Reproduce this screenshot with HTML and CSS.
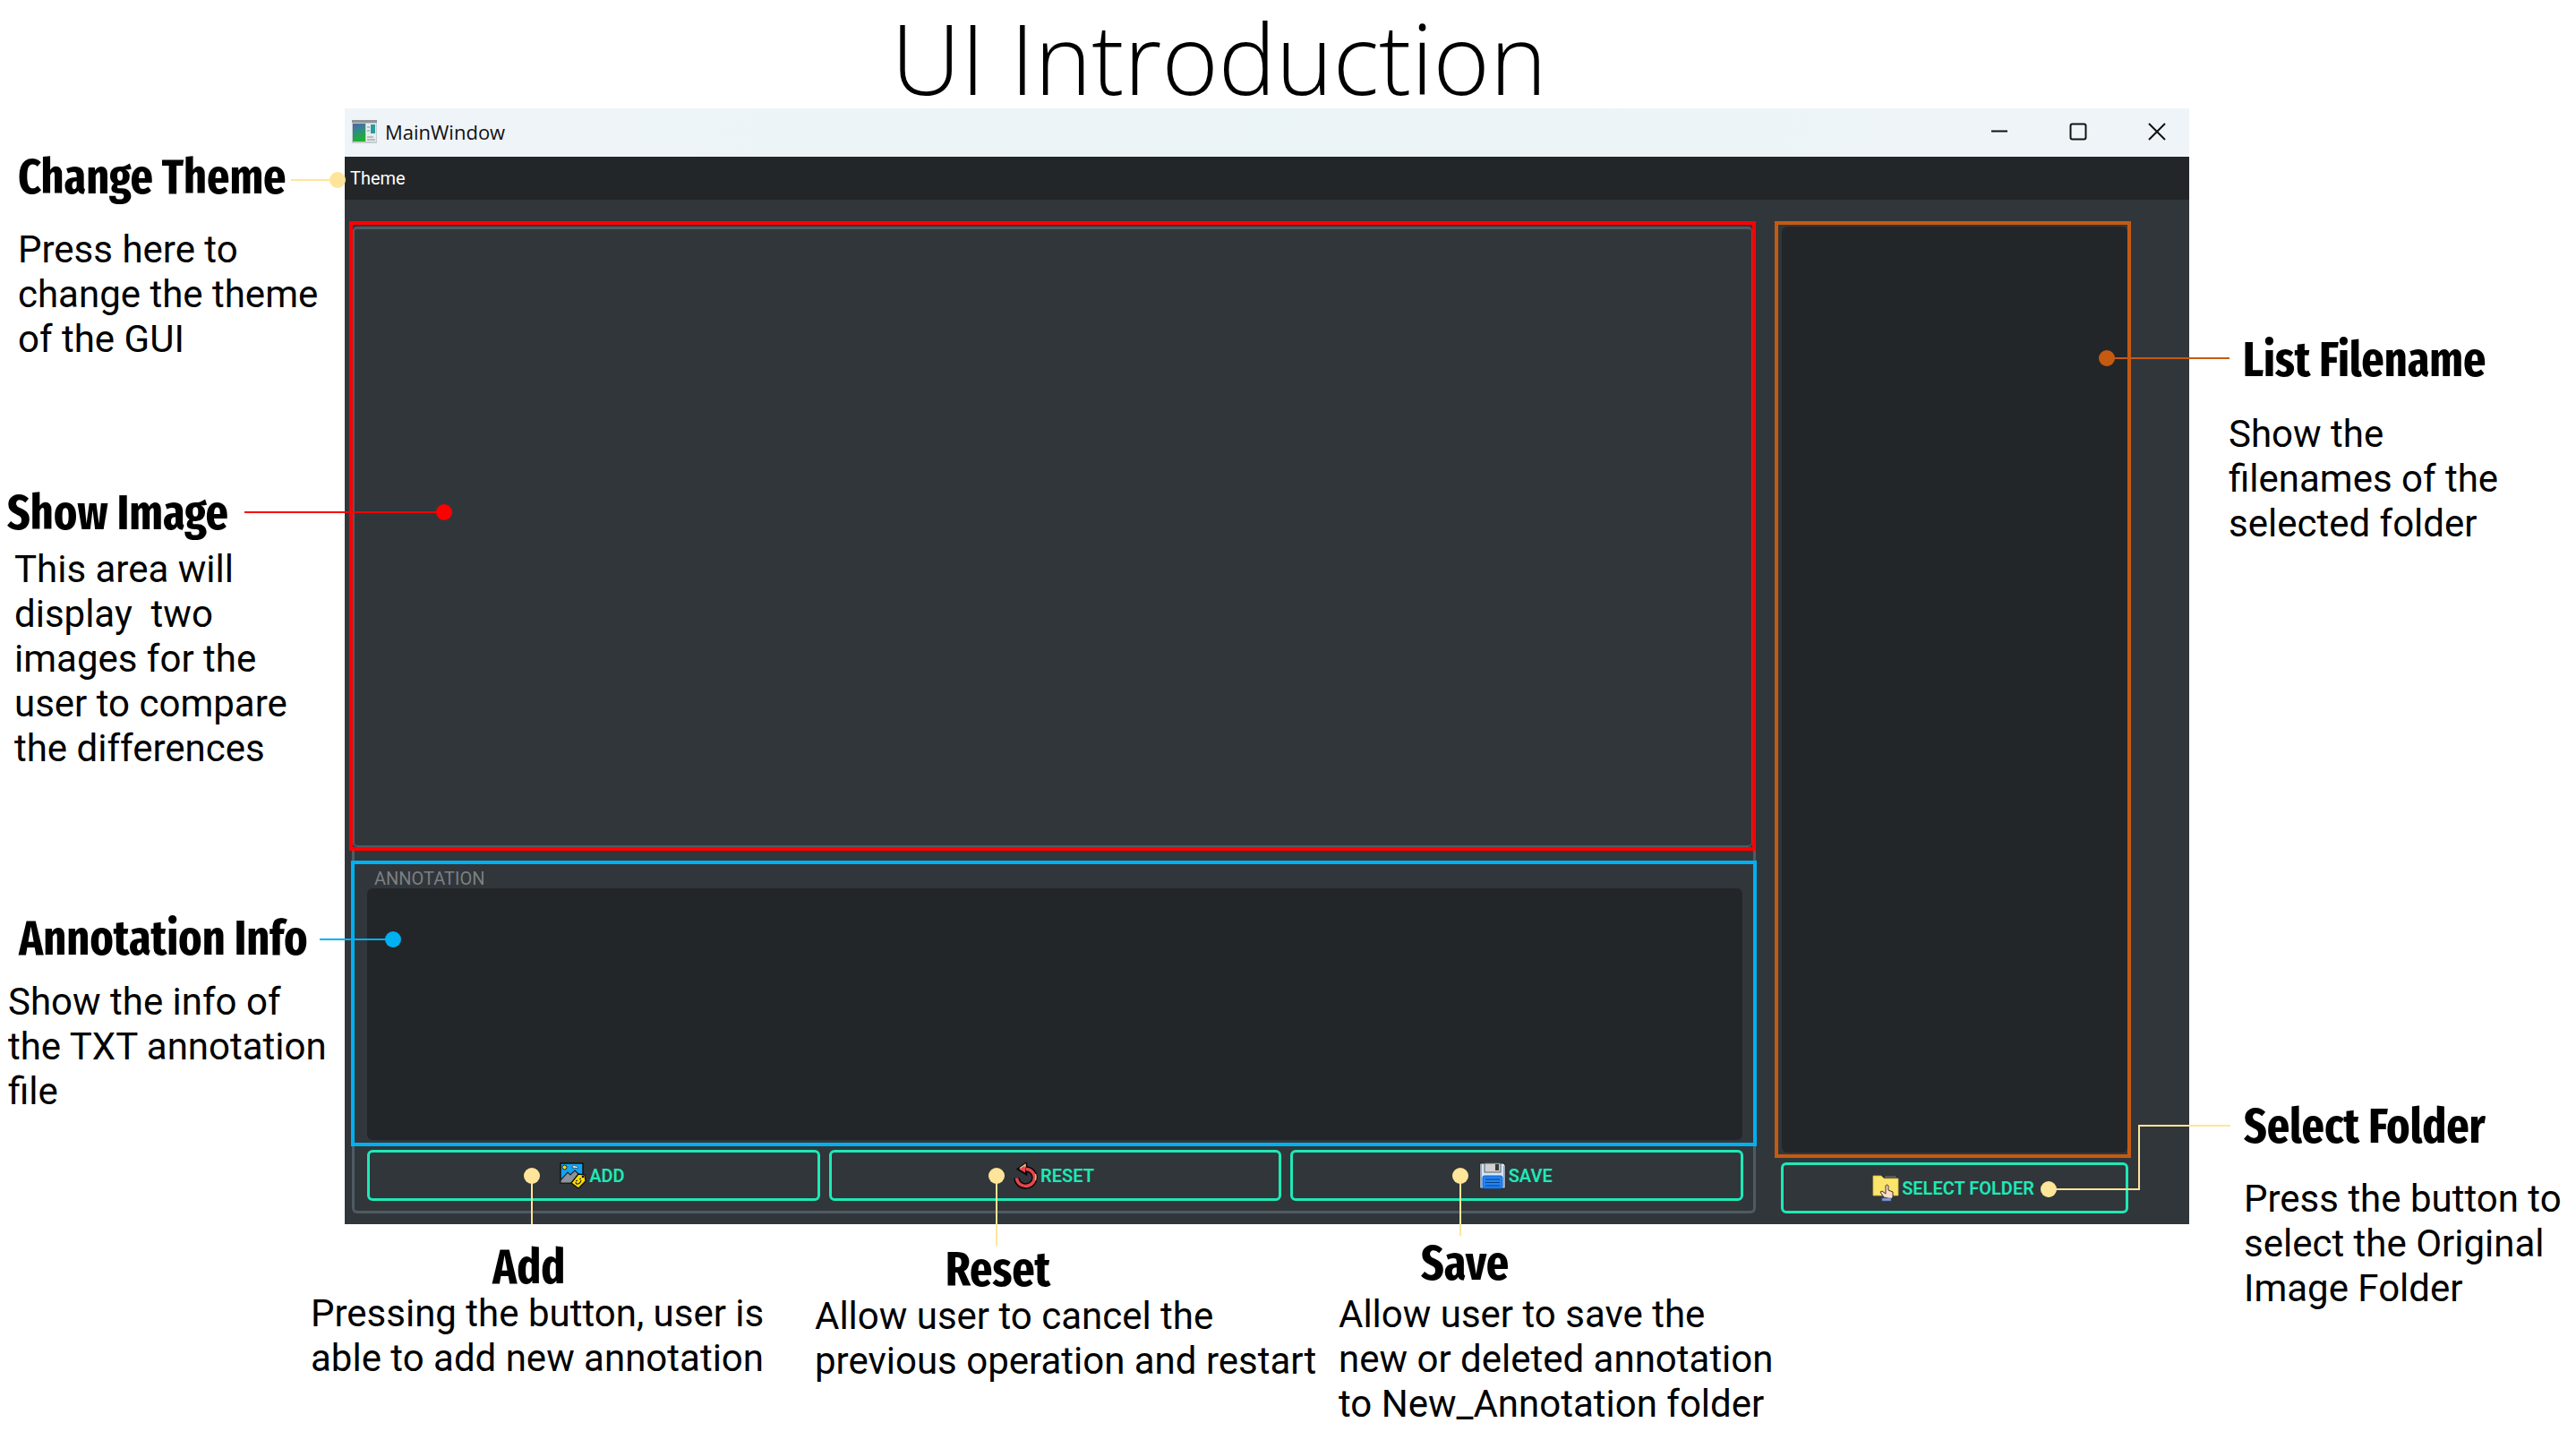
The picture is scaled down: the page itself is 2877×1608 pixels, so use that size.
FILE: index.html
```html
<!DOCTYPE html>
<html lang="en">
<head>
<meta charset="utf-8">
<title>UI Introduction</title>
<link rel="stylesheet" href="styles.css">
</head>
<body>
<h1 class="page-title">UI Introduction</h1>
<main class="guide">
  <aside class="notes-left">
    <section class="note note-theme">
      <h2>Change Theme</h2>
      <p>Press here to<br>change the theme<br>of the GUI</p>
    </section>
    <section class="note note-image">
      <h2>Show Image</h2>
      <p>This area will<br>display&nbsp; two<br>images for the<br>user to compare<br>the differences</p>
    </section>
    <section class="note note-annotation">
      <h2>Annotation Info</h2>
      <p>Show the info of<br>the TXT annotation<br>file</p>
    </section>
  </aside>

  <div class="window">
    <header class="titlebar">
      <svg class="app-icon" viewBox="0 0 28 26" aria-hidden="true">
        <defs><linearGradient id="scene" x1="0" y1="0" x2="0.3" y2="1"><stop offset="0" stop-color="#5560a8"/><stop offset="0.5" stop-color="#2f8c86"/><stop offset="1" stop-color="#1fb02c"/></linearGradient></defs>
        <rect x="0" y="0" width="28" height="26" fill="#c6cccf"/>
        <rect x="0" y="0" width="28" height="3" fill="#8d9599"/>
        <rect x="1" y="4" width="14" height="20" fill="url(#scene)"/>
        <rect x="16" y="4" width="11" height="20" fill="#e8ecee"/>
        <rect x="21" y="5" width="5" height="10" fill="#2a9a9c"/>
        <path d="M17 8h3M17 12h3M17 19h7M17 22h9" stroke="#a5adb1" stroke-width="1.5"/>
      </svg>
      <span class="window-name">MainWindow</span>
      <div class="window-controls">
        <button type="button" aria-label="Minimize"><svg viewBox="0 0 20 20"><path d="M1 9.500h18"/></svg></button>
        <button type="button" aria-label="Maximize"><svg viewBox="0 0 20 20"><rect x="1.500" y="1.500" width="17" height="17" rx="2"/></svg></button>
        <button type="button" aria-label="Close"><svg viewBox="0 0 20 20"><path d="M1 1l18 18M19 1L1 19"/></svg></button>
      </div>
    </header>
    <nav class="menubar"><button type="button">Theme</button></nav>
    <div class="workspace">
      <div class="editor">
        <div class="viewer"><div class="canvas"></div></div>
        <div class="group">
          <div class="annotation">
            <label for="annotation-text">ANNOTATION</label>
            <textarea id="annotation-text"></textarea>
          </div>
          <div class="actions">
            <button type="button" class="action">
              <svg viewBox="0 0 30 30" aria-hidden="true">
                <rect x="1" y="1" width="25" height="22" fill="#10a4f5" stroke="#111" stroke-width="1.500"/>
                <circle cx="5.500" cy="5.500" r="2.500" fill="#ffd800" stroke="#222"/>
                <path d="M14 6c0-2 2-3 3.500-2 2 0 3 1 3 2.500z" fill="#fff" stroke="#333" stroke-width=".8"/>
                <path d="M1 20L9 11l3 3 5-5 9 9v5H1z" fill="#8b949b" stroke="#222" stroke-width="1.200"/>
                <path d="M13 23l8-10 7 1 1 7-8 8z" fill="#ffdf00" stroke="#111" stroke-width="1.300" stroke-linejoin="round"/>
                <circle cx="26" cy="16" r="1.300" fill="#111"/>
                <path d="M18 22c0 3 5 3 6-2M18 21l2-1M22 19l2-1" fill="none" stroke="#222" stroke-width="1.200"/>
              </svg>ADD</button>
            <button type="button" class="action">
              <svg class="reset-icon" viewBox="0 0 27 30" aria-hidden="true">
                <path d="M3.500 17.500a10 9.500 0 1 0 10-10" fill="none" stroke="#080808" stroke-width="6.500"/>
                <path d="M5 7.500l9-6.500v12z" fill="#e5484d" stroke="#080808" stroke-width="2.500"/>
                <path d="M3.500 17.500a10 9.500 0 1 0 10-10" fill="none" stroke="#e5474d" stroke-width="3.500"/>
                <path d="M6 7.500l7-5v9z" fill="#e5474d"/>
                <path d="M7 6.500l6-4v3M24.500 13q1 3 0 7" fill="none" stroke="#efb77c" stroke-width="1.500"/>
              </svg>RESET</button>
            <button type="button" class="action">
              <svg viewBox="0 0 30 30" aria-hidden="true">
                <path d="M1 1h26l2 2v26H1z" fill="#d5e5f6" stroke="#20242a" stroke-width="1"/>
                <path d="M2 2v26M28 4v24" stroke="#9aa6b5" stroke-width="2"/>
                <rect x="6" y="1" width="18" height="10" fill="#d0d0d0" stroke="#5a5f66"/>
                <rect x="18" y="2" width="4" height="7" fill="#3a3a3a"/>
                <rect x="4" y="15" width="22" height="14" rx="2" fill="#1f84f5" stroke="#1763bf"/>
                <path d="M7 19h16M7 22.500h16M7 26h16" stroke="#0c3f85" stroke-width="1.200"/>
              </svg>SAVE</button>
          </div>
        </div>
      </div>
      <div class="files">
        <div class="file-frame"><ul class="file-list" aria-label="Filenames"></ul></div>
        <button type="button" class="action">
          <svg viewBox="0 0 30 30" aria-hidden="true">
            <path d="M1 1h9l3 3h16v19H1z" fill="#fbe46a" stroke="#d2b93d" stroke-width=".8"/>
            <path d="M13 1h15v2H14z" fill="#1d2023"/><path d="M14 2h13" stroke="#8c9298"/>
            <path d="M13 25l-4-6 2-1 4 3v-9q1.500-2 3 0v5l5 2v6l-2 2z" fill="#ffd9c7" stroke="#3b3431" stroke-width="1"/>
            <rect x="11" y="26" width="10" height="3" fill="#7f9fdc" stroke="#4c5f8a" stroke-width=".6"/>
          </svg>SELECT FOLDER</button>
      </div>
    </div>
    <div class="pin pin-theme"></div>
    <div class="pin pin-image"></div>
    <div class="pin pin-annotation"></div>
    <div class="pin pin-list"></div>
    <div class="pin pin-add"></div>
    <div class="pin pin-reset"></div>
    <div class="pin pin-save"></div>
    <div class="pin pin-select"></div>
  </div>

  <aside class="notes-right">
    <section class="note note-list">
      <h2>List Filename</h2>
      <p>Show the<br>filenames of the<br>selected folder</p>
    </section>
    <section class="note note-select">
      <h2>Select Folder</h2>
      <p>Press the button to<br>select the Original<br>Image Folder</p>
    </section>
  </aside>

  <div class="notes-bottom">
    <section class="note note-add">
      <h2>Add</h2>
      <p>Pressing the button, user is<br>able to add new annotation</p>
    </section>
    <section class="note note-reset">
      <h2>Reset</h2>
      <p>Allow user to cancel the<br>previous operation and restart</p>
    </section>
    <section class="note note-save">
      <h2>Save</h2>
      <p>Allow user to save the<br>new or deleted annotation<br>to New_Annotation folder</p>
    </section>
  </div>
</main>
</body>
</html>
```
FILE: styles.css
```css
* { box-sizing: border-box; }

body {
  margin: 0;
  background: #fff;
  color: #000;
  font-family: Roboto, "Liberation Sans", sans-serif;
}

h1, h2, p, ul { margin: 0; padding: 0; }
button { font: inherit; color: inherit; background: none; border: 0; padding: 0; }

.page-title {
  height: 121px;
  padding-right: 154px;
  font-family: "Open Sans", "Noto Sans", sans-serif;
  font-size: 108px;
  font-weight: 300;
  line-height: 130px;
  text-align: center;
}

.guide {
  display: grid;
  grid-template-columns: 385px 1fr 432px;
  grid-template-rows: auto 1fr;
}

/* Notes around the window */
.note h2 {
  font-family: "Fira Sans Extra Condensed", "Liberation Sans Narrow", "Roboto Condensed", "Liberation Sans", sans-serif;
  font-size: 54px;
  font-weight: 700;
  line-height: 64px;
  white-space: nowrap;
}
.note p {
  font-size: 42px;
  line-height: 50px;
  white-space: nowrap;
}
.note-theme { padding: 45px 0 0 20px; }
.note-theme p { margin-top: 24px; }
.note-image { padding: 137px 0 0 8px; }
.note-image p { padding: 6px 0 0 8px; }
.note-annotation { padding: 155px 0 0 9px; }
.note-annotation h2 { padding-left: 12px; }
.note-annotation p { margin-top: 14px; }

.notes-right { grid-column: 3; grid-row: 1 / 3; }
.note-list { padding: 249px 0 0 44px; }
.note-list h2 { padding-left: 16px; }
.note-list p { margin-top: 26px; }
.note-select { padding: 616px 0 0 61px; }
.note-select p { margin-top: 24px; }

.notes-bottom {
  grid-column: 1 / 3;
  grid-row: 2;
  display: grid;
  grid-template-columns: 563px 585px 1fr;
  padding: 12px 0 0 347px;
}
.note-add { padding-top: 4px; }
.note-add h2 { padding-left: 203px; }
.note-reset { padding-top: 7px; }
.note-reset h2 { padding-left: 146px; }
.note-add p, .note-reset p { margin-top: -5px; }
.note-save h2 { padding-left: 92px; }

/* Application window */
.window {
  position: relative;
  display: flex;
  flex-direction: column;
  background: #31363b;
  color: #fff;
}
.titlebar {
  display: flex;
  align-items: center;
  height: 54px;
  padding: 0 26px 2px 8px;
  background: linear-gradient(90deg, #eff4f8, #ebf4f7 50%, #eff4f8);
  color: #111;
}
.app-icon { width: 28px; height: 26px; }
.window-name {
  margin-left: 9px;
  font-family: "Open Sans", "Noto Sans", sans-serif;
  font-size: 22px;
}
.window-controls { display: flex; gap: 68px; margin-left: auto; }
.window-controls svg {
  display: block;
  width: 20px;
  height: 20px;
  fill: none;
  stroke: #111;
  stroke-width: 2;
}
.menubar {
  height: 48px;
  padding-left: 6px;
  background: #232629;
  font-size: 20px;
  line-height: 48px;
}
.workspace {
  display: grid;
  grid-template-columns: 1fr 398px;
  column-gap: 19px;
  padding: 24px 65px 12px 5px;
}
.editor { display: flex; flex-direction: column; }

.viewer {
  height: 703px;
  margin-right: 2px;
  padding-top: 2px;
  border: 4px solid #f00;
}
.canvas {
  height: 100%;
  border: 3px solid #4f5b62;
  border-width: 3px 1px 2px 2px;
  border-radius: 5px;
}
.group {
  margin: 0 2px 0 3px;
  padding-top: 11px;
  border: 3px solid #4f5b62;
  border-top: 0;
  border-radius: 0 0 6px 6px;
}
.annotation {
  margin: 0 -4px;
  padding: 5px 12px 3px 14px;
  border: 4px solid #00b0f0;
}
.annotation label {
  display: block;
  padding-left: 8px;
  color: #7b7f82;
  font-size: 20px;
  line-height: 22px;
}
.annotation textarea {
  display: block;
  width: 100%;
  height: 281px;
  border: 0;
  border-radius: 6px;
  background: #232629;
  color: #fff;
  resize: none;
}
.actions {
  display: grid;
  grid-template-columns: repeat(3, 1fr);
  gap: 10px;
  padding: 4px 11px 11px 14px;
}
.action {
  display: flex;
  align-items: center;
  justify-content: center;
  gap: 3px;
  height: 57px;
  padding-right: 3px;
  border: 3px solid #1de9b6;
  border-radius: 6px;
  color: #1de9b6;
  font-size: 20px;
  font-weight: 600;
}
.action svg { width: 30px; height: 30px; }
.action .reset-icon { width: 27px; }

.files { display: flex; flex-direction: column; }
.file-frame {
  height: 1046px;
  padding: 2px 0 2px 4px;
  border: 4px solid #c55a11;
}
.file-list {
  height: 100%;
  border-radius: 6px;
  background: #232629;
}
.files .action { margin: 5px 3px 0 7px; }

/* Callout markers with their leader lines */
.pin {
  position: absolute;
  width: 18px;
  height: 18px;
  border-radius: 50%;
  background: #ffe599;
}
.pin::before, .pin::after {
  content: "";
  position: absolute;
  background: inherit;
}
.pin::after { display: none; }
.pin::before { top: 8px; height: 2px; }
.pin-theme { left: -17px; top: 71px; }
.pin-theme::before { right: 9px; width: 52px; }
.pin-image { left: 102px; top: 442px; background: #f00; }
.pin-image::before { right: 9px; width: 223px; }
.pin-annotation { left: 45px; top: 919px; background: #00b0f0; }
.pin-annotation::before { right: 9px; width: 82px; }
.pin-list { right: 83px; top: 270px; background: #c55a11; }
.pin-list::before { left: 9px; width: 137px; }
.pin-add, .pin-reset, .pin-save { top: 1183px; }
.pin-add { left: 200px; }
.pin-reset { left: 719px; }
.pin-save { left: 1237px; }
.pin-add::before, .pin-reset::before, .pin-save::before { left: 8px; top: 9px; width: 2px; }
.pin-add::before { height: 54px; }
.pin-reset::before { height: 78px; }
.pin-save::before { height: 67px; }
.pin-select { right: 148px; top: 1198px; }
.pin-select::before { left: 9px; width: 102px; }
.pin-select::after {
  display: block;
  left: 109px;
  bottom: 8px;
  width: 101px;
  height: 71px;
  border: solid #ffe599;
  border-width: 2px 0 0 2px;
  background: none;
}
```
